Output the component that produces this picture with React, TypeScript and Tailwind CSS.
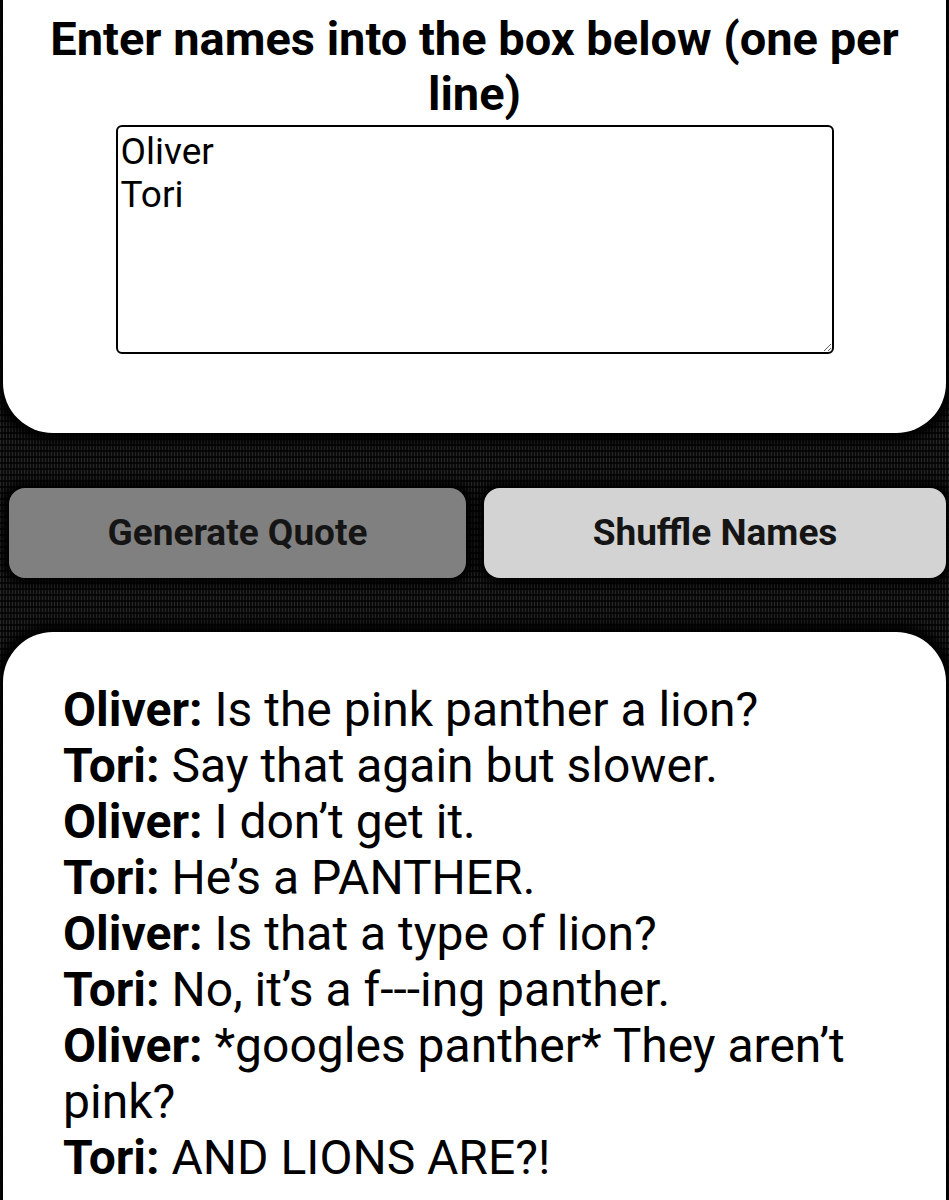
import React from 'react';

const names = ['Oliver', 'Tori'];

const quote = [
  { who: 'Oliver', line: 'Is the pink panther a lion?' },
  { who: 'Tori', line: 'Say that again but slower.' },
  { who: 'Oliver', line: 'I don’t get it.' },
  { who: 'Tori', line: 'He’s a PANTHER.' },
  { who: 'Oliver', line: 'Is that a type of lion?' },
  { who: 'Tori', line: 'No, it’s a f---ing panther.' },
  { who: 'Oliver', line: '*googles panther* They aren’t pink?' },
  { who: 'Tori', line: 'AND LIONS ARE?!' },
];

const App = () => {
  return (
    <div className="min-h-[1200px] w-[949px] overflow-hidden bg-[#0a0a0a] bg-[repeating-linear-gradient(0deg,rgba(0,0,0,0.7)_0_2px,transparent_2px_6px),repeating-linear-gradient(90deg,#262626_0_1px,#0c0c0c_1px_3px)] font-['Roboto',sans-serif] text-black">
      {/* name entry card */}
      <div className="ml-[3px] w-[943px] h-[433px] rounded-b-[50px] bg-white pt-[11px] flex flex-col items-center shadow-[0_0_10px_8px_#000]">
        <h1 className="w-[900px] text-center text-[47px] leading-[55px] font-bold">
          Enter names into the box below (one per line)
        </h1>
        <textarea
          className="mt-[4px] w-[718px] h-[229px] rounded-[6px] border-2 border-black px-[3px] py-[3px] text-[37px] leading-[43px] font-['Roboto',sans-serif] resize-y outline-none"
          defaultValue={names.join('\n')}
        />
      </div>

      {/* action buttons */}
      <div className="mt-[55px] flex gap-[18px] pl-[9px] pr-[3px]">
        <button className="h-[90px] w-[457px] rounded-[16px] bg-[#808080] text-[37px] font-bold text-[#151515] shadow-[0_0_8px_6px_#000]">
          Generate Quote
        </button>
        <button className="h-[90px] flex-1 rounded-[16px] bg-[#d3d3d3] text-[37px] font-bold text-[#151515] shadow-[0_0_8px_6px_#000]">
          Shuffle Names
        </button>
      </div>

      {/* generated quote */}
      <div className="mt-[54px] ml-[3px] w-[943px] min-h-[600px] rounded-t-[50px] bg-white pl-[60px] pr-[20px] pt-[50px] shadow-[0_0_10px_8px_#000]">
        {quote.map((q, i) => (
          <p key={i} className="text-[48px] leading-[56px]">
            <span className="font-bold">{q.who}:</span> {q.line}
          </p>
        ))}
      </div>
    </div>
  );
};

export default App;
